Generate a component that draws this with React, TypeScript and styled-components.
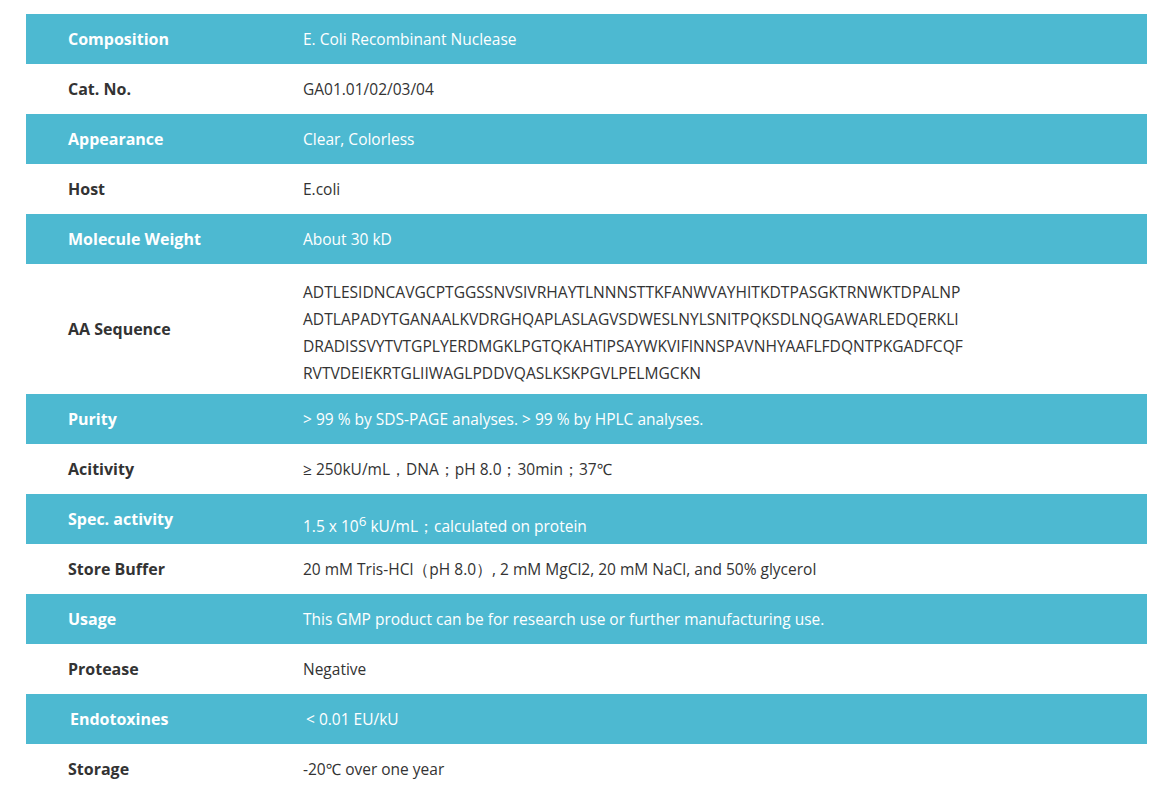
import React from "react";
import styled, { createGlobalStyle } from "styled-components";

interface SpecRow {
  label: string;
  value: React.ReactNode;
  shift?: boolean;
}

const GlobalStyle = createGlobalStyle`
  body {
    margin: 0;
    background: #fff;
    font-family: "Open Sans", "Noto Sans", sans-serif;
  }
`;

const Page = styled.div`
  padding: 14px 26px 13px 26px;
`;

const SpecTable = styled.table`
  width: 100%;
  border-collapse: collapse;
  table-layout: fixed;
`;

const Row = styled.tr<{ $filled: boolean }>`
  background: ${(p) => (p.$filled ? "#4db9d1" : "#fff")};
  color: ${(p) => (p.$filled ? "#fff" : "#333")};
  height: 50px;
`;

const LabelCell = styled.td<{ $shift?: boolean }>`
  width: 235px;
  padding: 0 0 0 ${(p) => (p.$shift ? 44 : 42)}px;
  font-size: 16px;
  font-weight: 700;
  vertical-align: middle;
`;

const ValueCell = styled.td<{ $shift?: boolean }>`
  padding: 0 0 0 ${(p) => (p.$shift ? 3 : 0)}px;
  font-size: 15.5px;
  vertical-align: middle;
`;

const Sequence = styled.div`
  padding: 15px 0 7px;
  font-size: 15.6px;
  line-height: 27px;
`;

const SupLine = styled.div`
  padding-top: 12px;

  sup {
    font-size: 13.5px;
  }
`;

const sequence = [
  "ADTLESIDNCAVGCPTGGSSNVSIVRHAYTLNNNSTTKFANWVAYHITKDTPASGKTRNWKTDPALNP",
  "ADTLAPADYTGANAALKVDRGHQAPLASLAGVSDWESLNYLSNITPQKSDLNQGAWARLEDQERKLI",
  "DRADISSVYTVTGPLYERDMGKLPGTQKAHTIPSAYWKVIFINNSPAVNHYAAFLFDQNTPKGADFCQF",
  "RVTVDEIEKRTGLIIWAGLPDDVQASLKSKPGVLPELMGCKN",
];

const rows: SpecRow[] = [
  { label: "Composition", value: "E. Coli Recombinant Nuclease" },
  { label: "Cat. No.", value: "GA01.01/02/03/04" },
  { label: "Appearance", value: "Clear, Colorless" },
  { label: "Host", value: "E.coli" },
  { label: "Molecule Weight", value: "About 30 kD" },
  {
    label: "AA Sequence",
    value: (
      <Sequence>
        {sequence.map((line) => (
          <div key={line}>{line}</div>
        ))}
      </Sequence>
    ),
  },
  {
    label: "Purity",
    value: "> 99 % by SDS-PAGE analyses. > 99 % by HPLC analyses.",
  },
  {
    label: "Acitivity",
    value: "≥ 250kU/mL，DNA；pH 8.0；30min；37℃",
  },
  {
    label: "Spec. activity",
    value: (
      <SupLine>
        1.5 x 10<sup>6</sup> kU/mL；calculated on protein
      </SupLine>
    ),
  },
  {
    label: "Store Buffer",
    value:
      "20 mM Tris-HCl（pH 8.0）, 2 mM MgCl2, 20 mM NaCl, and 50% glycerol",
  },
  {
    label: "Usage",
    value:
      "This GMP product can be for research use or further manufacturing use.",
  },
  { label: "Protease", value: "Negative" },
  { label: "Endotoxines", value: "< 0.01 EU/kU", shift: true },
  { label: "Storage", value: "-20℃ over one year" },
];

const App: React.FC = () => {
  return (
    <>
      <GlobalStyle />
      <Page>
        <SpecTable>
          <tbody>
            {rows.map((row, i) => (
              <Row key={row.label} $filled={i % 2 === 0}>
                <LabelCell $shift={row.shift}>{row.label}</LabelCell>
                <ValueCell $shift={row.shift}>{row.value}</ValueCell>
              </Row>
            ))}
          </tbody>
        </SpecTable>
      </Page>
    </>
  );
};

export default App;
